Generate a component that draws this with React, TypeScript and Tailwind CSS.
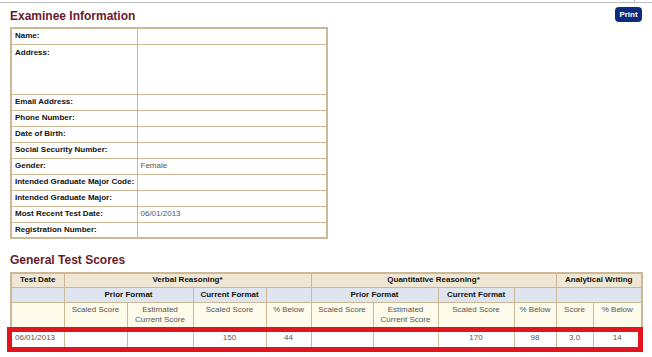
export default function App() {
  const info: { label: string; value?: string; tall?: boolean }[] = [
    { label: 'Name:' },
    { label: 'Address:', tall: true },
    { label: 'Email Address:' },
    { label: 'Phone Number:' },
    { label: 'Date of Birth:' },
    { label: 'Social Security Number:' },
    { label: 'Gender:', value: 'Female' },
    { label: 'Intended Graduate Major Code:' },
    { label: 'Intended Graduate Major:' },
    { label: 'Most Recent Test Date:', value: '06/01/2013' },
    { label: 'Registration Number:' },
  ];

  const cols = [53, 63, 66, 73, 45, 62, 65, 76, 42, 37, 49];
  const cell = 'border border-[#cbb894] px-[3px]';
  const sub = `${cell} font-normal align-top pt-[2px]`;

  return (
    <div className="relative w-[652px] h-[357px] overflow-hidden bg-white font-['Liberation_Sans',Arial,sans-serif] text-[8px] leading-[10px] text-[#222]">
      {/* top rule */}
      <div className="flex items-start pt-[2px]">
        <div className="h-px w-[634px] bg-[#bdbdbd]" />
        <div className="-mt-[2px] h-[3px] w-[18px] border-l border-b border-[#bdbdbd]" />
      </div>

      <div className="px-[10px]">
        <div className="mt-[4px] flex items-start justify-between">
          <h1 className="pt-[2px] text-[12px] leading-[14px] font-bold text-[#6a1a2c]">Examinee Information</h1>
          <button className="h-[15px] w-[27px] rounded-[4px] bg-[#0c2b7c] text-[8px] leading-[15px] font-bold text-white">
            Print
          </button>
        </div>

        {/* Examinee info table */}
        <table className="mt-[4px] w-[316px] table-fixed border-collapse border-2 border-[#cbb894]">
          <colgroup>
            <col className="w-[126px]" />
            <col className="w-[190px]" />
          </colgroup>
          <tbody>
            {info.map((r) => (
              <tr key={r.label} className={r.tall ? 'h-[50px]' : 'h-[16px]'}>
                <td className={`${cell} whitespace-nowrap font-bold text-[#111] ${r.tall ? 'align-top pt-[3px]' : 'align-middle'}`}>{r.label}</td>
                <td className={`${cell} text-[#555] align-middle`}>{r.value ?? ''}</td>
              </tr>
            ))}
          </tbody>
        </table>

        <h2 className="mt-[14px] text-[12px] leading-[14px] font-bold text-[#6a1a2c]">General Test Scores</h2>

        {/* Scores table */}
        <div className="relative mt-[5px]">
          <table className="w-[631px] table-fixed border-collapse border-2 border-[#cbb894] text-center">
            <colgroup>
              {cols.map((w, i) => (
                <col key={i} style={{ width: w }} />
              ))}
            </colgroup>
            <thead>
              <tr className="h-[14px] bg-[#efe7d4] font-bold text-[#111]">
                <th className={cell}>Test Date</th>
                <th className={cell} colSpan={4}>Verbal Reasoning*</th>
                <th className={cell} colSpan={4}>Quantitative Reasoning*</th>
                <th className={cell} colSpan={2}>Analytical Writing</th>
              </tr>
              <tr className="h-[15px] bg-[#dfe5ef] font-bold text-[#111]">
                <th className={cell}></th>
                <th className={cell} colSpan={2}>Prior Format</th>
                <th className={cell}>Current Format</th>
                <th className={cell}></th>
                <th className={cell} colSpan={2}>Prior Format</th>
                <th className={cell}>Current Format</th>
                <th className={cell}></th>
                <th className={cell} colSpan={2}></th>
              </tr>
              <tr className="h-[25px] bg-[#fffbea] text-[#555]">
                <th className={sub}></th>
                <th className={sub}>Scaled Score</th>
                <th className={sub}>
                  Estimated
                  <br />
                  Current Score
                </th>
                <th className={sub}>Scaled Score</th>
                <th className={sub}>% Below</th>
                <th className={sub}>Scaled Score</th>
                <th className={sub}>
                  Estimated
                  <br />
                  Current Score
                </th>
                <th className={sub}>Scaled Score</th>
                <th className={sub}>% Below</th>
                <th className={sub}>Score</th>
                <th className={sub}>% Below</th>
              </tr>
            </thead>
            <tbody>
              <tr className="h-[22px] text-[#555]">
                <td className={`${cell} text-left`}>06/01/2013</td>
                <td className={cell}></td>
                <td className={cell}></td>
                <td className={cell}>150</td>
                <td className={cell}>44</td>
                <td className={cell}></td>
                <td className={cell}></td>
                <td className={cell}>170</td>
                <td className={cell}>98</td>
                <td className={cell}>3.0</td>
                <td className={cell}>14</td>
              </tr>
            </tbody>
          </table>
          {/* highlight annotation */}
          <div className="pointer-events-none absolute left-[-3px] top-[55px] h-[25px] w-[636px] border-[5px] border-[#e4141e]" />
        </div>
      </div>
    </div>
  );
}
